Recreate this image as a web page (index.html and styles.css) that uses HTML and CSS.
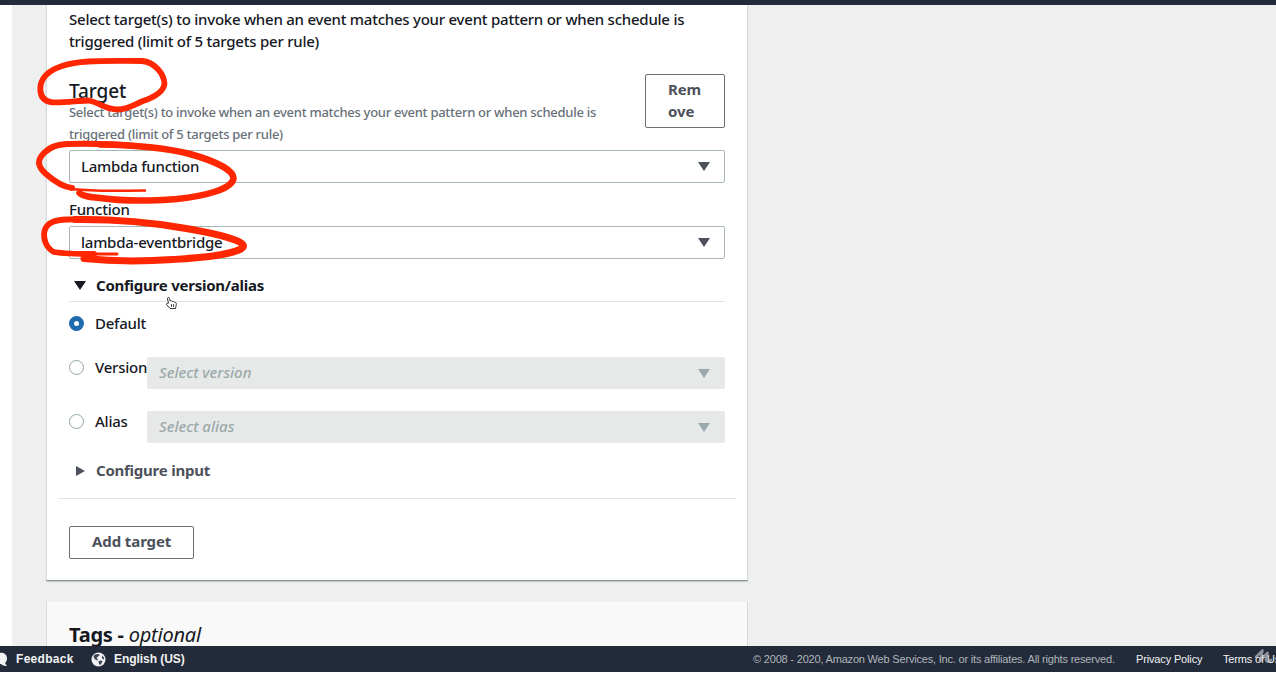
FILE: index.html
```html
<!DOCTYPE html>
<html lang="en">
<head>
<meta charset="utf-8">
<title>Create rule - Select targets</title>
<link rel="stylesheet" href="styles.css">
</head>
<body>
<div class="topbar"></div>
<main class="page">
  <div class="rail"></div>
  <div class="content">
    <section class="panel targets">
      <p class="intro">Select target(s) to invoke when an event matches your event pattern or when schedule is<br>triggered (limit of 5 targets per rule)</p>
      <div class="target-head">
        <div>
          <h2 class="target-title">Target</h2>
          <p class="hint">Select target(s) to invoke when an event matches your event pattern or when schedule is<br>triggered (limit of 5 targets per rule)</p>
        </div>
        <button class="button remove">Rem<br>ove</button>
      </div>
      <div class="select"><span>Lambda function</span><i class="down"></i></div>
      <div class="label">Function</div>
      <div class="select"><span>lambda-eventbridge</span><i class="down"></i></div>
      <div class="expander open"><i class="down"></i><span>Configure version/alias</span></div>
      <div class="option default"><i class="radio on"></i><span class="option-name">Default</span></div>
      <div class="option version"><i class="radio"></i><span class="option-name">Version</span><div class="select disabled"><span>Select version</span><i class="down"></i></div></div>
      <div class="option alias"><i class="radio"></i><span class="option-name">Alias</span><div class="select disabled"><span>Select alias</span><i class="down"></i></div></div>
      <div class="expander closed"><i class="right"></i><span>Configure input</span></div>
      <button class="button add">Add target</button>
    </section>
    <section class="panel tags"><h2>Tags - <em>optional</em></h2></section>
  </div>
</main>
<footer class="footer">
  <svg class="bubble" width="8" height="16" viewBox="0 0 8 16"><path d="M0 2C4 1 7 4 7 7.500C7 10 6 11 5 12L7 15C4 15 2 14 1 13H0Z" fill="#f3f3f3"/></svg>
  <b class="feedback">Feedback</b>
  <svg class="globe" width="15" height="15" viewBox="0 0 15 15"><circle cx="7.500" cy="7.500" r="7" fill="#f0f1f2"/><path d="M2.500 4L4 2.500L7 2L9 3L7 4.500L5.500 6L7 7.500L6 8.500L3.500 7ZM11 3.500L13 5.500L13 7.500L11 6.500ZM7.500 9L10.500 8.500L11.500 9.500L9.500 13L8 12Z" fill="#3c4552"/></svg>
  <b class="language">English (US)</b>
  <span class="copyright">© 2008 - 2020, Amazon Web Services, Inc. or its affiliates. All rights reserved.</span>
  <span class="privacy">Privacy Policy</span>
  <span class="terms">Terms of Use</span>
</footer>
<svg class="ink" width="1276" height="678" viewBox="0 0 1276 678">
  <g fill="none" stroke="#ff2600" stroke-linecap="round" stroke-linejoin="round">
    <path stroke-width="5.800" d="M88 100.500C76 101 62 103 52 102.300C43 101 39.500 95 40.500 86C42 76 50 70 62 66C80 60 100 61 142 61C154 62 164 73 164.500 84C163 93 152 98 143 101C135 104 129 109 118 109.500C106 110 99 102 88 100.500"/>
    <path stroke-width="6" d="M72 188C64 187 54 181 46 174C37 166 37 160 44 153C51 146 58 144.500 68 144C90 143.500 112 144 134 146"/>
    <path stroke-width="6.500" d="M100 144.500C140 145 170 149 190 154C215 161 233 170 233.500 178C233 189 205 196 177 199C150 201 120 201 100 198C90 197 82 196 79.500 193"/>
    <path stroke-width="2.600" d="M72 189C98 192 122 190.500 145 190.500"/>
    <path stroke-width="5.800" d="M94 254C80 254 66 254 54 252C46 248 43 239 44.500 231C47 222 55 220 67 219.500C80 219 92 219 105 220"/>
    <path stroke-width="7" d="M75 219.500C120 219 155 223 183 228C207 232 225 236 235 240C243 243 246 246 241 249C227 256 195 258 173 259.500C143 261.500 108 261 84 258.500"/>
    <path stroke-width="3" d="M82 254L117 254"/>
  </g>
  <path d="M168.500 303L167.500 299C167.500 297 169.200 297 169.600 298.500L170.200 301C171 300.500 172 300.800 172.500 301.500C174 301 174.500 302 174.700 302.500C176 302.300 176.500 303 176.300 304.500L175.500 308.500H170L166.500 304.500C166.300 303 167.500 302.500 168.500 304" fill="#fff" stroke="#333" stroke-width="1"/>
  <path d="M171.500 304V307M173.500 304V307" stroke="#222" stroke-width=".8"/>
  <path d="M1256 657L1262.500 650.500L1260 661L1267.500 653L1266 660C1266.500 662.500 1269 662 1271 660" fill="none" stroke="#c9ccd0" stroke-opacity=".65" stroke-width="2.600" stroke-linecap="round" stroke-linejoin="round"/>
</svg>
</body>
</html>
```
FILE: styles.css
```css
* { box-sizing: border-box; }
body { margin: 0; width: 1276px; height: 678px; overflow: hidden; position: relative; background: #fff; color: #16191f; font: 500 15px/22px "Noto Sans", sans-serif; letter-spacing: -.24px; }
h2, p { margin: 0; font-weight: 500; }
.topbar { height: 5px; background: #232b3a; }
.page { display: flex; height: 641px; overflow: hidden; background: #efefef; }
.rail { width: 12px; flex: none; background: #fff; }
.content { width: 737px; flex: none; padding-left: 34px; }
.panel { width: 702px; border: 1px solid #d5dbdb; border-top: 0; background: #fff; padding: 0 22px; }
.targets { height: 576px; padding-top: 3px; border-bottom: 1px solid #879596; box-shadow: 0 1px 1px #c8cece; }
.intro { white-space: nowrap; height: 66px; }
.target-head { display: flex; justify-content: space-between; height: 76px; white-space: nowrap; }
.target-title { font-size: 19px; line-height: 22px; padding-top: 6px; letter-spacing: -.1px; }
.hint { font-size: 13px; line-height: 21.500px; letter-spacing: -.28px; color: #687078; height: 43px; }
.button { display: flex; align-items: center; background: #fff; border: 1px solid #687078; border-radius: 2px; color: #4c515c; font: 700 15px/22px "Noto Sans", sans-serif; letter-spacing: -.1px; padding: 0 22px 2px; text-align: left; white-space: nowrap; }
.remove { width: 80px; height: 54px; }
.select { display: flex; align-items: center; justify-content: space-between; width: 656px; height: 33px; border: 1px solid #aab7b8; border-radius: 2px; background: #fff; padding: 0 14px 0 11px; white-space: nowrap; }
.select span { padding-bottom: 2px; }
.label { height: 43px; padding-top: 15px; }
.down { border: 0 solid transparent; border-width: 9px 6px 0; border-top-color: #4c515c; flex: none; }
.right { border: 5.500px solid transparent; border-left: 9px solid #4c515c; border-right: 0; flex: none; }
.expander { display: flex; align-items: center; font-weight: 700; white-space: nowrap; }
.expander span { padding-bottom: 2px; }
.open { height: 43px; padding: 11px 0 0 5px; gap: 10px; border-bottom: 1px solid #e2e5e5; }
.open .down { border-top-color: #16191f; }
.option { display: flex; }
.radio { width: 15px; height: 15px; border: 1px solid #95a5a6; border-radius: 50%; background: #fff; margin-top: 3px; flex: none; }
.on { border: 5px solid #1f6bb0; }
.option-name { width: 52px; margin: -1px 0 0 11px; flex: none; white-space: nowrap; }
.default { height: 55px; padding-top: 11px; }
.version, .alias { height: 54px; }
.disabled { width: 578px; height: 32px; border: 0; background: #e7e9e9; color: #9ba9aa; font-style: italic; letter-spacing: 0; padding: 0 15px 0 12px; }
.disabled .down { border-top-color: #9ba9aa; }
.closed { height: 34px; line-height: 12px; margin: 0 -11px; padding: 0 0 21px 18px; gap: 11px; color: #4c515c; border-bottom: 1px solid #e2e5e5; }
.add { width: 125px; height: 33px; margin-top: 27px; padding-bottom: 3px; }
.tags { margin-top: 21px; height: 80px; background: #f9f9f9; padding-top: 22px; }
.tags h2 { font-size: 20px; line-height: 22px; font-weight: 700; white-space: pre; }
.tags em { font-weight: 400; }
.footer { height: 26px; display: flex; align-items: center; background: #232b3a; color: #f2f3f3; font: 11px/26px "Liberation Sans", Arial, sans-serif; white-space: nowrap; overflow: hidden; letter-spacing: -.15px; }
.footer > * { flex: none; }
.footer b { font-size: 12px; letter-spacing: -.05px; }
.footer .feedback { width: 75px; margin-left: 8px; letter-spacing: .3px; }
.language { width: 639px; margin-left: 8px; }
.copyright { width: 383px; color: #b0b6ba; letter-spacing: -.19px; }
.privacy { width: 87px; }
.ink { position: absolute; left: 0; top: 0; pointer-events: none; }
```
